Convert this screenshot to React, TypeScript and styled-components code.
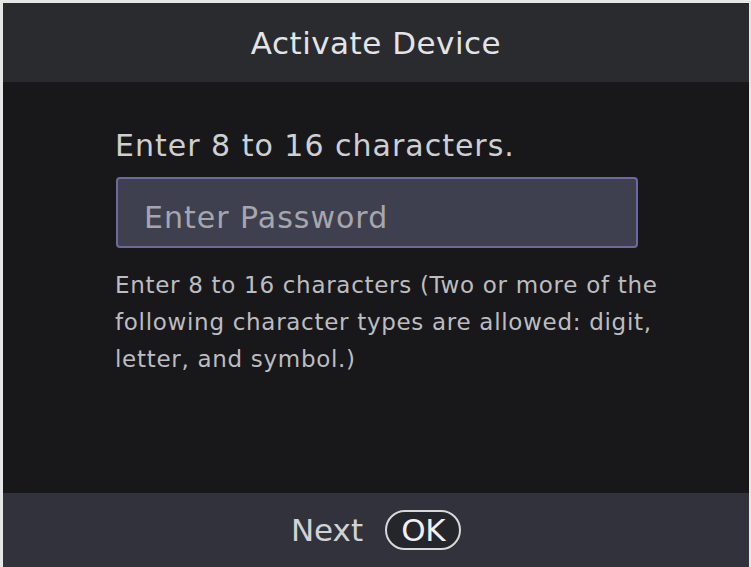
import React from 'react'
import styled, { createGlobalStyle } from 'styled-components'

const GlobalStyle = createGlobalStyle`
  html, body {
    margin: 0;
    padding: 0;
    background: #f2f2f2;
  }
  body {
    font-family: 'DejaVu Sans', 'Noto Sans', sans-serif;
  }
`

// Outer device frame with the thin light bezel around the screen
const Frame = styled.div`
  width: 751px;
  height: 567px;
  box-sizing: border-box;
  padding: 3px 2px 0 3px;
  background: #e6e6e6;
`

const Screen = styled.div`
  height: 100%;
  display: flex;
  flex-direction: column;
  background: #18181b;
  color: #d2d2d4;
`

const Header = styled.header`
  height: 79px;
  flex-shrink: 0;
  display: flex;
  align-items: center;
  justify-content: center;
  background: #2a2b2f;
  font-size: 31px;
  letter-spacing: 0.5px;
  color: #e4e4e6;
`

const Body = styled.main`
  flex: 1;
  padding: 46px 0 0 112px;
`

const Prompt = styled.div`
  font-size: 30px;
  line-height: 36px;
  letter-spacing: 1px;
  color: #cfcfd1;
`

const PasswordField = styled.input`
  display: block;
  box-sizing: border-box;
  width: 522px;
  height: 71px;
  margin: 13px 0 0 1px;
  padding: 10px 0 0 26px;
  border: 2px solid #6c699c;
  border-radius: 4px;
  background: #3f404f;
  color: #d2d2d4;
  font-family: inherit;
  font-size: 30px;
  letter-spacing: 1px;
  outline: none;

  &::placeholder {
    color: #a6a6ae;
  }
`

const Hint = styled.p`
  width: 560px;
  margin: 19px 0 0 0;
  font-size: 23px;
  line-height: 37px;
  letter-spacing: 0.7px;
  color: #bdbdc0;
`

const Footer = styled.footer`
  height: 74px;
  flex-shrink: 0;
  display: flex;
  align-items: center;
  justify-content: center;
  gap: 22px;
  background: #32323c;
  font-size: 31px;
  color: #d2d2d4;
`

const KeyBadge = styled.span`
  display: inline-flex;
  align-items: center;
  justify-content: center;
  width: 76px;
  height: 40px;
  box-sizing: border-box;
  border: 2.5px solid #d8d8da;
  border-radius: 20px;
  background: #25252c;
  font-size: 31px;
  letter-spacing: -0.5px;
  color: #f0f0f2;
`

export default function App() {
  return (
    <>
      <GlobalStyle />
      <Frame>
        <Screen>
          <Header>Activate Device</Header>
          <Body>
            <Prompt>Enter 8 to 16 characters.</Prompt>
            <PasswordField type="password" placeholder="Enter Password" />
            <Hint>
              Enter 8 to 16 characters (Two or more of the following character
              types are allowed: digit, letter, and symbol.)
            </Hint>
          </Body>
          <Footer>
            <span>Next</span>
            <KeyBadge>OK</KeyBadge>
          </Footer>
        </Screen>
      </Frame>
    </>
  )
}
